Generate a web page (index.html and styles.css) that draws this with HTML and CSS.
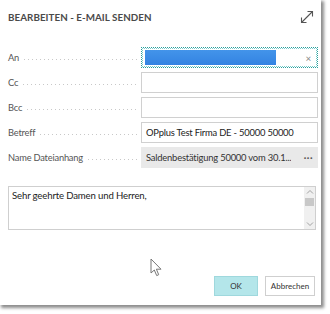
FILE: index.html
```html
<!DOCTYPE html>
<html lang="de">
<head>
<meta charset="utf-8">
<link rel="stylesheet" href="styles.css">
</head>
<body>
<div class="dialog">
  <div class="header">
    <h1 class="title">BEARBEITEN - E-MAIL SENDEN</h1>
    <svg class="expand" width="14" height="14" viewBox="0 0 14 14">
      <path d="M1.5 12.5 L12.5 1.5 M7.5 1.5 H12.5 V6.5 M1.5 7.5 V12.5 H6.5" fill="none" stroke="#555" stroke-width="1.1"/>
    </svg>
  </div>
  <div class="form">
    <div class="label"><span>An</span><i class="dots"></i></div>
    <div class="field focus"><span class="sel"></span><span class="clear">×</span></div>
    <div class="label"><span>Cc</span><i class="dots"></i></div>
    <div class="field"></div>
    <div class="label"><span>Bcc</span><i class="dots"></i></div>
    <div class="field"></div>
    <div class="label"><span>Betreff</span><i class="dots"></i></div>
    <div class="field">OPplus Test Firma DE - 50000 50000</div>
    <div class="label"><span>Name Dateianhang</span><i class="dots"></i></div>
    <div class="field readonly"><span class="ro-text">Saldenbestätigung 50000 vom 30.1...</span><span class="more">···</span></div>
  </div>
  <div class="body">
    <div class="body-text">Sehr geehrte Damen und Herren,</div>
    <div class="scroll">
      <svg width="8" height="6" viewBox="0 0 8 6"><path d="M1 4.5 L4 1.5 L7 4.5" fill="none" stroke="#999" stroke-width="0.9"/></svg>
      <div class="thumb"></div>
      <div class="track"></div>
      <svg width="8" height="6" viewBox="0 0 8 6"><path d="M1 1.5 L4 4.5 L7 1.5" fill="none" stroke="#999" stroke-width="0.9"/></svg>
    </div>
  </div>
  <div class="cursor-area">
    <svg class="cursor" width="13" height="20" viewBox="0 0 13 20">
      <path d="M1 1 V15 L4.3 12 L6.7 17.6 L8.7 16.7 L6.4 11.2 H11 Z" fill="#fff" stroke="#777" stroke-width="1" stroke-linejoin="round"/>
    </svg>
  </div>
  <div class="actions">
    <button class="btn primary">OK</button>
    <button class="btn">Abbrechen</button>
  </div>
</div>
</body>
</html>
```
FILE: styles.css
```css
* { box-sizing: border-box; }
html, body { margin: 0; padding: 0; background: #fff; }
body {
  font-family: Lato, "Open Sans", sans-serif;
  color: #333;
  width: 330px;
  height: 314px;
  overflow: hidden;
}
.dialog {
  width: 321px;
  height: 305px;
  background: #fff;
  box-shadow: 2px 2px 3px 1px rgba(0,0,0,0.45);
  padding: 0 3px 0 8px;
  display: flex;
  flex-direction: column;
}
.header {
  display: flex;
  justify-content: space-between;
  align-items: flex-start;
  height: 47px;
  padding-top: 10px;
}
.title {
  margin: 0;
  font-family: Lato, sans-serif;
  font-weight: 700;
  font-size: 9.8px;
  letter-spacing: 0.05px;
  color: #4a4a4a;
  line-height: 14px;
}
.expand { margin: 0 4px 0 0; }
.form {
  display: grid;
  grid-template-columns: 133px 177px;
  grid-auto-rows: 21px;
  row-gap: 4px;
}
.label {
  display: flex;
  align-items: center;
  font-size: 9.3px;
  letter-spacing: -0.2px;
  color: #555;
  padding-right: 4px;
}
.dots {
  flex: 1;
  height: 1px;
  margin: 3px 0 0 5px;
  background-image: linear-gradient(to right, #c8c8c8 1px, transparent 1px);
  background-size: 4px 1px;
}
.field {
  border: 1px solid #d0d0d0;
  font-size: 9.4px;
  letter-spacing: -0.2px;
  color: #222;
  display: flex;
  align-items: center;
  padding: 0 4px;
  white-space: nowrap;
  overflow: hidden;
}
.field.focus {
  border: 1px dotted #2a9d9a;
  outline: 1px dotted #7cc;
  outline-offset: -2px;
  justify-content: space-between;
  padding: 0 4px 0 3px;
}
.sel {
  display: block;
  width: 131px;
  height: 15px;
  background: linear-gradient(to bottom, #4394ea, #3383e2);
}
.clear { color: #888; font-size: 10px; margin-right: 2px; }
.field.readonly {
  background: #e9e9e9;
  border-color: #e9e9e9;
  justify-content: space-between;
}
.ro-text { color: #333; overflow: hidden; }
.more { color: #555; font-weight: 700; flex: none; margin-left: 4px; letter-spacing: 0.5px; }
.body {
  margin-top: 18px;
  width: 308px;
  height: 44px;
  border: 1px solid #cfcfcf;
  display: flex;
  justify-content: space-between;
}
.body-text {
  font-size: 9.6px;
  letter-spacing: -0.15px;
  color: #222;
  padding: 3px 3px;
}
.scroll {
  width: 11px;
  background: #f0f0f0;
  display: flex;
  flex-direction: column;
  align-items: center;
  padding: 2px 0;
}
.thumb { width: 9px; height: 8px; background: #c8c8c8; margin-top: 3px; }
.track { flex: 1; }
.cursor-area {
  height: 46px;
  padding: 28px 0 0 142px;
}
.cursor { display: block; }
.actions {
  display: flex;
  justify-content: flex-end;
  gap: 7px;
  padding-right: 3px;
}
.btn {
  font-family: Lato, sans-serif;
  font-size: 8px;
  color: #333;
  height: 20px;
  background: #fff;
  border: 1px solid #cfcfcf;
  padding: 0;
  width: 50px;
}
.btn.primary {
  width: 44px;
  background: #b4e6ea;
  border-color: #9fd8dd;
}
```
